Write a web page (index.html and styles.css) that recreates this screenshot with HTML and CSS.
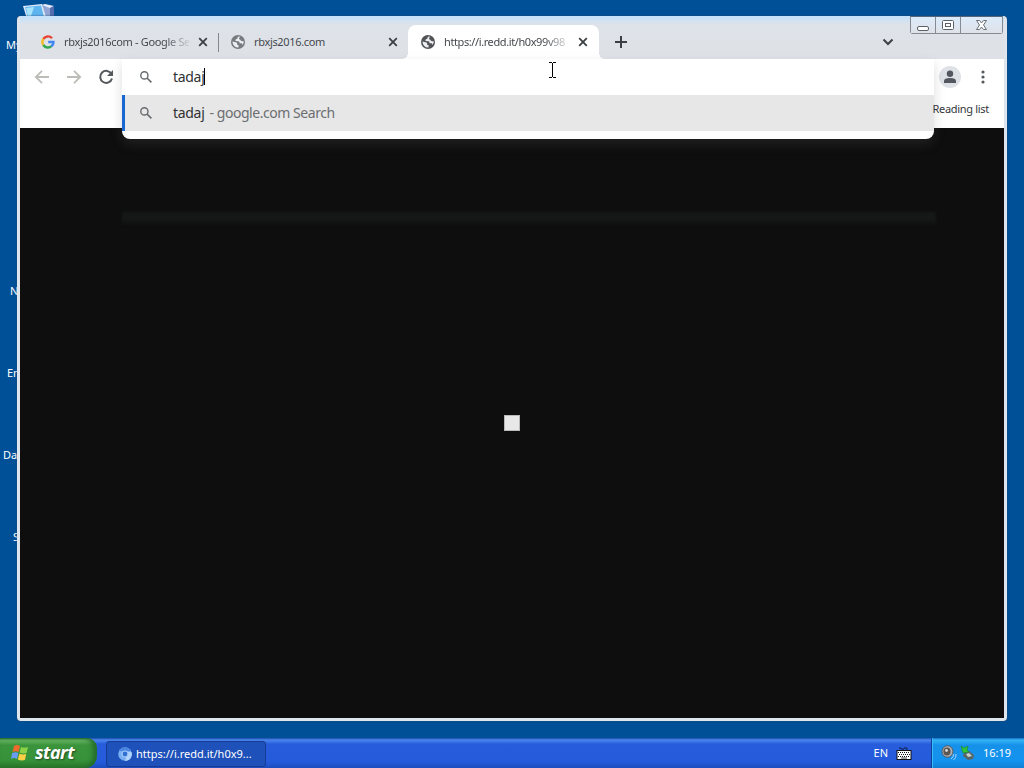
FILE: index.html
```html
<!DOCTYPE html>
<html lang="en">
<head>
    <meta charset="UTF-8">
    <title>Desktop</title>
    <link rel="stylesheet" href="styles.css">
</head>
<body>
    <svg width="0" height="0" class="defs">
        <symbol id="globe" viewBox="0 0 14 14">
            <circle cx="7" cy="7" r="7" fill="currentColor"/>
            <path d="M7.6 1.5 Q6 2.2 6.4 3.8 Q4.2 3.9 4.4 6 L7.6 6.2 Q8.8 6.8 8.6 8.2 L10.4 8.3 Q11.5 8.6 11.4 10 Q13 8.4 12.7 6 Q10.7 6.7 9.7 5.5 Q9.4 4.3 8 4.2 Q7.7 2.7 9.3 1.8Z M1.4 6.5 L4.6 7.2 Q6.4 7.5 6.3 9 L6.2 10.1 L7.7 10.2 L7.5 12.6 Q2 12.6 1.4 6.5Z" fill="#eceef0"/>
        </symbol>
        <symbol id="cross" viewBox="0 0 10 10">
            <path d="M1.200 1.200 L8.800 8.800 M8.800 1.200 L1.200 8.800" stroke="currentColor" stroke-width="1.800" fill="none"/>
        </symbol>
        <symbol id="search" viewBox="0 0 12 12">
            <circle cx="4.4" cy="4.4" r="3.6" stroke="currentColor" stroke-width="1.4" fill="none"/>
            <path d="M7 7 L11.4 11.4" stroke="currentColor" stroke-width="1.6"/>
        </symbol>
    </svg>

    <div class="desktop">
        <svg class="computer" width="34" height="18" viewBox="0 0 34 18">
            <path d="M20 5 L31 6 L31 18 L20 18Z" fill="#91a4d3"/>
            <path d="M18 4 L22 3 L31 5 L27 7Z" fill="#e4eafa"/>
            <path d="M27 7 L31 5 V18 H27Z" fill="#536cad"/>
            <path d="M0 5 L19 3 L23 16 L4 18Z" fill="#dfe8fa"/>
            <path d="M2 6 L18 4.5 L21 16 L5 17.5Z" fill="#5eb4ee"/>
            <path d="M3 7 L11 6 L8 15 L5 16Z" fill="#a8e4fc"/>
        </svg>
        <span class="label my">My</span>
        <span class="label network">N</span>
        <span class="label entertainment">En</span>
        <span class="label data">Da</span>
        <span class="label setup">S</span>

        <div class="window">
            <div class="controls">
                <div class="control"><svg width="25" height="17"><rect x="6.500" y="9.500" width="11" height="4" rx="1.500" fill="#fff" stroke="#5b616b"/></svg></div>
                <div class="control"><svg width="25" height="17"><rect x="6.500" y="3.500" width="11" height="9" rx="1" fill="#fff" stroke="#5b616b"/><rect x="9.500" y="6.500" width="5" height="3" fill="#fff" stroke="#5b616b"/></svg></div>
                <div class="control wide"><svg width="41" height="17"><path d="M15.500 3.500 H18.500 L20.500 6 L22.500 3.500 H25.500 L22.500 8 L25.500 12.500 H22.500 L20.500 10 L18.500 12.500 H15.500 L18.500 8Z" fill="#fff" stroke="#6a6e75"/></svg></div>
            </div>
            <div class="tabs">
                <div class="tab first">
                    <svg class="favicon" viewBox="0 0 14 14">
                        <g fill="none" stroke-width="2.400">
                            <path d="M2.300 4 A5.500 5.500 0 0 1 11 3.200" stroke="#e94335"/>
                            <path d="M2.300 4 A5.500 5.500 0 0 0 2.300 10" stroke="#f6bb20"/>
                            <path d="M2.300 10 A5.500 5.500 0 0 0 10.500 11.200" stroke="#34a853"/>
                            <path d="M10.500 11.200 Q12.500 9.600 12.500 7 H7.200" stroke="#4285f4"/>
                        </g>
                    </svg>
                    <span class="title faded">rbxjs2016com - Google Se</span>
                    <svg class="close"><use href="#cross"/></svg>
                </div>
                <div class="tab second">
                    <svg class="favicon gray"><use href="#globe"/></svg>
                    <span class="title">rbxjs2016.com</span>
                    <svg class="close"><use href="#cross"/></svg>
                </div>
                <div class="tab active">
                    <svg class="favicon"><use href="#globe"/></svg>
                    <span class="title faded url">https://i.redd.it/h0x99v98</span>
                    <svg class="close"><use href="#cross"/></svg>
                </div>
                <svg class="plus" width="12" height="12"><path d="M6 0 V12 M0 6 H12" stroke="#3c4043" stroke-width="2"/></svg>
                <svg class="chevron" width="12" height="8"><path d="M1.500 1.500 L6 6 L10.500 1.500" stroke="#3c4043" stroke-width="2" fill="none"/></svg>
            </div>
            <div class="toolbar">
                <svg class="nav" viewBox="0 0 16 16"><path d="M15 8 H2 M8 1.800 L1.800 8 L8 14.200" stroke="#bdbdb8" stroke-width="1.800" fill="none"/></svg>
                <svg class="nav" viewBox="0 0 16 16"><path d="M1 8 H14 M8 1.800 L14.200 8 L8 14.200" stroke="#bdbdb8" stroke-width="1.800" fill="none"/></svg>
                <svg class="nav" viewBox="0 0 16 16"><path d="M13.500 5 A6 6 0 1 0 14 9.500" stroke="#55585c" stroke-width="2" fill="none"/><path d="M15 1 V7 H9Z" fill="#55585c"/></svg>
                <svg class="avatar" viewBox="0 0 22 22"><circle cx="11" cy="11" r="11" fill="#dee1e6"/><circle cx="11" cy="7.800" r="3.200" fill="#54565f"/><path d="M5 17 V15 Q5 12 11 12 Q17 12 17 15 V17Z" fill="#54565f"/></svg>
                <svg class="menu" width="4" height="14"><g fill="#55585c"><circle cx="2" cy="2" r="1.600"/><circle cx="2" cy="7" r="1.600"/><circle cx="2" cy="12" r="1.600"/></g></svg>
            </div>
            <div class="bookmarks"><span>Reading list</span></div>
            <div class="page">
                <div class="image"></div>
            </div>
            <div class="shade"></div>
            <div class="omnibox">
                <div class="row input">
                    <svg class="glass"><use href="#search"/></svg>
                    <span class="typed">tadaj</span><i class="caret"></i>
                </div>
                <div class="row suggestion">
                    <svg class="glass"><use href="#search"/></svg>
                    <span class="typed">tadaj</span><span class="hint">- google.com Search</span>
                </div>
            </div>
        </div>

        <svg class="cursor" width="7" height="16"><path d="M0 .5 H3 M4 .5 H7 M3.500 1 V15 M0 15.500 H3 M4 15.500 H7" stroke="#000"/></svg>
    </div>

    <div class="taskbar">
        <div class="start">
            <svg width="18" height="18" viewBox="0 0 18 18">
                <path d="M3 2 Q6 0 9 2 L7.500 8 Q4.500 6.500 1.500 8Z" fill="#ef6a2d"/>
                <path d="M10 3 Q13 4.500 17 3 L15.500 9 Q12 10 8.500 8.500Z" fill="#8bd246"/>
                <path d="M1.200 9 Q4.500 7.500 7.300 9 L6 15 Q3 13 0 15Z" fill="#699cf4"/>
                <path d="M8.300 9.700 Q12 11 15.200 10 L14 16 Q10 17 6.800 15.500Z" fill="#fbd044"/>
            </svg>
            <span>start</span>
        </div>
        <div class="task">
            <svg width="14" height="14" viewBox="0 0 14 14">
                <circle cx="7" cy="7" r="6.800" fill="#78aef2"/>
                <path d="M1 4 A6.800 6.800 0 0 1 13 4 L7 4Z" fill="#4a86e0"/>
                <path d="M7 14 A6.800 6.800 0 0 0 13.500 5 L10 5Z" fill="#b1d4fb"/>
                <circle cx="7" cy="7" r="3" fill="#2f70d4" stroke="#a5cbf8" stroke-width="1.200"/>
            </svg>
            <span>https://i.redd.it/h0x9...</span>
        </div>
        <div class="language">
            <span>EN</span>
            <svg width="16" height="13" viewBox="0 0 16 13">
                <path d="M3 1 H5 V2 H8 V1 H11 V3" stroke="#10204c" fill="none"/>
                <rect x="1" y="3.500" width="14" height="9" fill="#fff" stroke="#111"/>
                <path d="M2 5.500 H14 M3 7.500 H14 M2 9.500 H14" stroke="#111" stroke-dasharray="1 1"/>
                <path d="M5 11 H11" stroke="#111" stroke-width=".8"/>
            </svg>
        </div>
        <div class="tray">
            <svg width="16" height="16" viewBox="0 0 16 16">
                <ellipse cx="6.500" cy="6.500" rx="5.500" ry="5.800" fill="#aeb2b8" stroke="#55585e"/>
                <ellipse cx="6" cy="6.500" rx="3.600" ry="4" fill="#5c5652"/>
                <circle cx="5.500" cy="5.500" r="1.400" fill="#ddd"/>
                <path d="M10 14 Q13 12 12.500 9 M12.500 15 Q15.500 13 15 9" stroke="#a6d2ff" fill="none"/>
            </svg>
            <svg width="15" height="16" viewBox="0 0 15 16">
                <path d="M4 8 L9 6 L14 10 L13 14 L8 15 L3 11Z" fill="#596667"/>
                <path d="M6 9 L9 8 L12 11 L8 12Z" fill="#c6d3cc"/>
                <path d="M1 1 L4 3 L8 1 L7 5 L9 7 L3 8Z" fill="#31c437" stroke="#16812b" stroke-width=".6"/>
            </svg>
            <span>16:19</span>
        </div>
    </div>
</body>
</html>
```
FILE: styles.css
```css
body {
    margin: 0;
    width: 1024px;
    height: 768px;
    overflow: hidden;
    background: #005097;
    font-family: "Noto Sans", "DejaVu Sans", sans-serif;
    font-size: 11px;
}
.defs {
    position: absolute;
}
.desktop {
    position: relative;
    height: 738px;
    overflow: hidden;
}
.computer {
    position: absolute;
    left: 23px;
    top: 1px;
}
.label {
    position: absolute;
    color: white;
    line-height: 14px;
}
.my {
    left: 6px;
    top: 38px;
}
.network {
    left: 10px;
    top: 284px;
}
.entertainment {
    left: 7px;
    top: 366px;
}
.data {
    left: 3px;
    top: 448px;
}
.setup {
    left: 13px;
    top: 530px;
}
.window {
    position: absolute;
    left: 17px;
    top: 16px;
    width: 984px;
    height: 702px;
    border: 3px solid #dfe5ec;
    border-top: 0;
    border-radius: 4px;
    background: #dee1e6;
    box-shadow: 0 0 2px #24456b;
}
.controls {
    position: absolute;
    right: 1px;
    top: 0;
    display: flex;
    border: 1px solid #858b94;
    border-top-color: #53657c;
    border-radius: 0 0 3px 3px;
    z-index: 1;
}
.control {
    width: 24px;
    height: 16px;
    border-right: 1px solid #858b94;
    overflow: hidden;
    background: linear-gradient(#dcebfb, #dfe2e7);
}
.control svg {
    display: block;
}
.control.wide {
    width: 41px;
    border-right: 0;
}
.tabs {
    display: flex;
    align-items: center;
    height: 34px;
    padding-top: 9px;
    background: linear-gradient(#c4e1fc, #dee3e9 9px, #dee1e6);
}
.tab {
    display: flex;
    align-items: center;
    box-sizing: border-box;
    height: 34px;
    color: #45484d;
}
.tab.first {
    width: 199px;
    padding-left: 21px;
    position: relative;
}
.tab.first::after {
    content: "";
    position: absolute;
    right: 0;
    top: 8px;
    width: 1px;
    height: 19px;
    background: #85898e;
}
.tab.second {
    width: 189px;
    padding-left: 12px;
}
.tab.active {
    width: 191px;
    padding-left: 13px;
    border-radius: 8px 8px 0 0;
    background: #fff;
    position: relative;
}
.tab.active::before,
.tab.active::after {
    content: "";
    position: absolute;
    bottom: 0;
    width: 6px;
    height: 6px;
}
.tab.active::before {
    left: -6px;
    background: radial-gradient(circle at 0 0, transparent 6px, #fff 6px);
}
.tab.active::after {
    right: -6px;
    background: radial-gradient(circle at 100% 0, transparent 6px, #fff 6px);
}
.favicon {
    width: 14px;
    height: 14px;
    margin-right: 9px;
    color: #515357;
}
.favicon.gray {
    color: #777b80;
}
.title {
    width: 125px;
    padding-bottom: 2px;
    overflow: hidden;
    white-space: nowrap;
    letter-spacing: -0.33px;
}
.title.url {
    letter-spacing: -0.4px;
}
.faded {
    -webkit-mask-image: linear-gradient(90deg, #000 100px, transparent 128px);
    mask-image: linear-gradient(90deg, #000 100px, transparent 128px);
}
.close {
    width: 10px;
    height: 10px;
    margin-left: 9px;
    color: #3c4043;
}
.plus {
    margin-left: 16px;
}
.chevron {
    margin-left: auto;
    margin-right: 110px;
}
.toolbar {
    display: flex;
    align-items: center;
    height: 36px;
    padding: 0 19px 0 14px;
    background: #fff;
}
.nav {
    width: 16px;
    height: 16px;
    margin-right: 16px;
}
.avatar {
    width: 22px;
    height: 22px;
    margin-left: auto;
}
.menu {
    margin-left: 20px;
}
.bookmarks {
    height: 33px;
    line-height: 28px;
    padding-right: 15px;
    text-align: right;
    color: #34363a;
    background: #fff;
}
.bookmarks span {
    position: relative;
    z-index: 1;
    letter-spacing: -0.3px;
}
.page {
    display: flex;
    align-items: center;
    justify-content: center;
    height: 590px;
    background: #0e0e0e;
}
.image {
    width: 14px;
    height: 14px;
    border: 1px solid #b9b9b9;
    background: #e8e8e8;
}
.shade {
    position: absolute;
    left: 102px;
    top: 196px;
    width: 814px;
    height: 14px;
    background: linear-gradient(#151817, #151817 50%, #0e0e0e);
    filter: blur(1px);
}
.omnibox {
    position: absolute;
    left: 102px;
    top: 43px;
    width: 812px;
    height: 80px;
    border-radius: 0 0 8px 8px;
    background: #fff;
    box-shadow: 0 5px 12px rgba(100, 100, 100, .22);
}
.row {
    display: flex;
    align-items: center;
    box-sizing: border-box;
    height: 36px;
    padding-left: 18px;
    font-size: 14px;
    letter-spacing: -0.3px;
    color: #303134;
}
.row span {
    padding-bottom: 2px;
}
.suggestion {
    padding-left: 15px;
    border-left: 3px solid #1967d2;
    background: #e7e7e7;
}
.glass {
    width: 12px;
    height: 12px;
    margin-right: 21px;
    color: #66696d;
}
.caret {
    width: 1px;
    height: 17px;
    margin-bottom: 2px;
    background: #000;
}
.hint {
    margin-left: 5px;
    letter-spacing: -0.45px;
    color: #6c6e71;
}
.cursor {
    position: absolute;
    left: 549px;
    top: 62px;
}
.taskbar {
    display: flex;
    height: 30px;
    color: white;
    background: linear-gradient(#1c4ca9, #4b86ee 2px, #275ddb 6px, #245bdc 24px, #1d4dbd);
}
.start {
    display: flex;
    align-items: center;
    box-sizing: border-box;
    width: 97px;
    padding-left: 11px;
    border-radius: 0 10px 12px 0;
    background: linear-gradient(#256b27, #6bb968 2px, #3b943b 7px, #36923a 22px, #287828);
    box-shadow: inset -4px 0 5px #246c2c;
    font: italic bold 18px "Open Sans", sans-serif;
    letter-spacing: -0.5px;
    text-shadow: 1px 1px 2px #204b20;
}
.start span {
    margin-left: 6px;
    padding-bottom: 2px;
    line-height: 26px;
}
.task {
    display: flex;
    align-items: center;
    box-sizing: border-box;
    width: 160px;
    height: 26px;
    margin: 3px 0 0 9px;
    padding-left: 11px;
    border: 1px solid #173b94;
    border-radius: 3px;
    background: #1e51b9;
}
.task span {
    margin-left: 4px;
    padding-bottom: 2px;
}
.language {
    display: flex;
    align-items: center;
    margin-left: auto;
    margin-right: 19px;
}
.language span {
    padding-bottom: 2px;
}
.language svg {
    margin-left: 8px;
}
.tray {
    display: flex;
    align-items: center;
    box-sizing: border-box;
    width: 93px;
    padding-left: 9px;
    border-left: 1px solid #123e9b;
    box-shadow: inset 1px 0 #37bff8;
    background: linear-gradient(#146cc5, #34b5f6 2px, #1691e9 7px, #1393ef 23px, #1180d2);
}
.tray svg {
    margin-right: 3px;
}
.tray span {
    margin-left: 5px;
    padding-bottom: 2px;
}
```
